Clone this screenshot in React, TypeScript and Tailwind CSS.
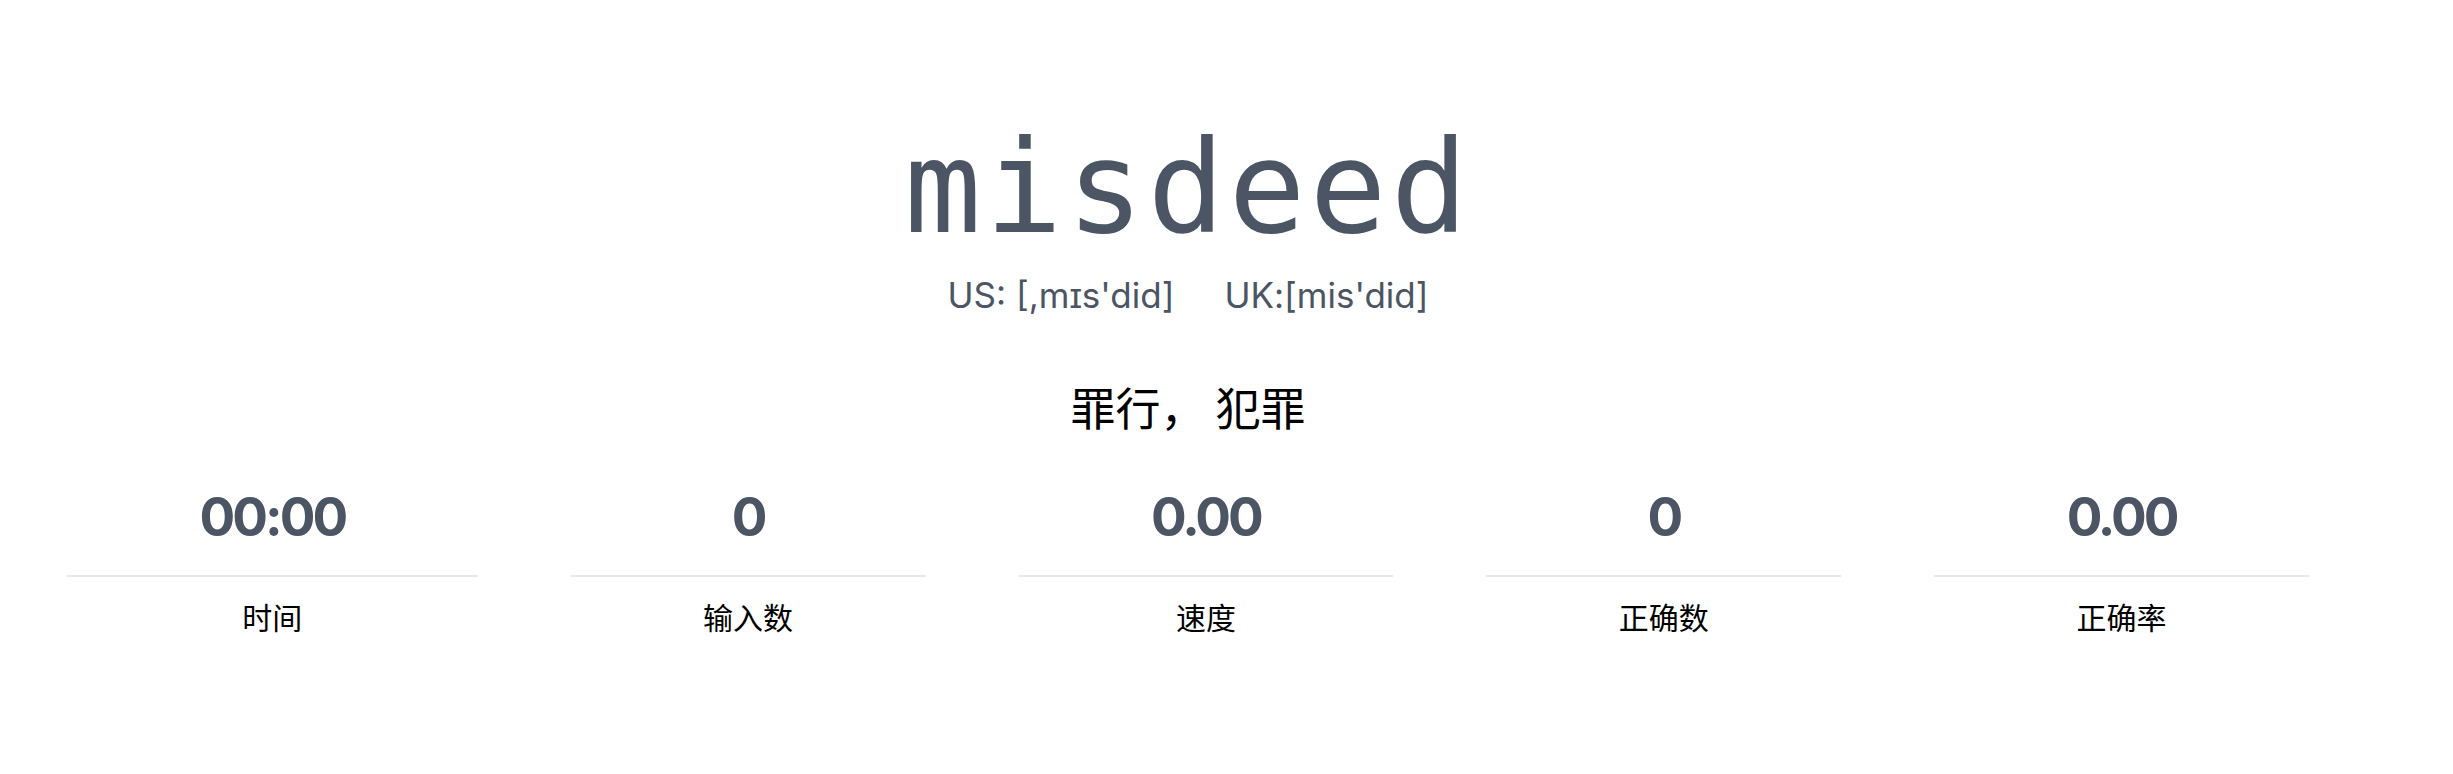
import React from "react";

const stats = [
  { value: "00:00", label: "时间" },
  { value: "0", label: "输入数" },
  { value: "0.00", label: "速度" },
  { value: "0", label: "正确数" },
  { value: "0.00", label: "正确率" },
];

const cjk = "font-['Noto_Sans_CJK_SC','Noto_Sans',sans-serif]";

const App: React.FC = () => {
  return (
    <div className="w-[2453px] h-[774px] bg-white overflow-hidden">
      <div className="w-[2376px] flex flex-col items-center pt-[124px]">
        {/* word */}
        <div className="font-['DejaVu_Sans_Mono',monospace] text-[128px] leading-none tracking-[4px] text-[#4b5563]">
          misdeed
        </div>

        {/* phonetics */}
        <div className="mt-[22px] flex gap-[50px] font-['Inter',sans-serif] text-[35px] leading-[42px] text-[#4b5563]">
          <span>US: [,mɪs'did]</span>
          <span>UK:[mis'did]</span>
        </div>

        {/* translation */}
        <div className={`mt-[68px] ${cjk} text-[45px] leading-none text-black`}>
          罪行， 犯罪
        </div>

        {/* stats */}
        <div className="mt-[62px] w-full flex gap-[93px] px-[67px]">
          {stats.map((s) => (
            <div key={s.label} className="grow basis-auto flex flex-col items-center">
              <div className="font-['Inter',sans-serif] font-bold text-[53px] leading-none tracking-[-3px] text-[#4b5563]">
                {s.value}
              </div>
              <div className="mt-[31px] w-full h-[2px] bg-[#e8e8e8]" />
              <div className={`mt-[24px] ${cjk} text-[30px] leading-none text-black`}>
                {s.label}
              </div>
            </div>
          ))}
        </div>
      </div>
    </div>
  );
};

export default App;
